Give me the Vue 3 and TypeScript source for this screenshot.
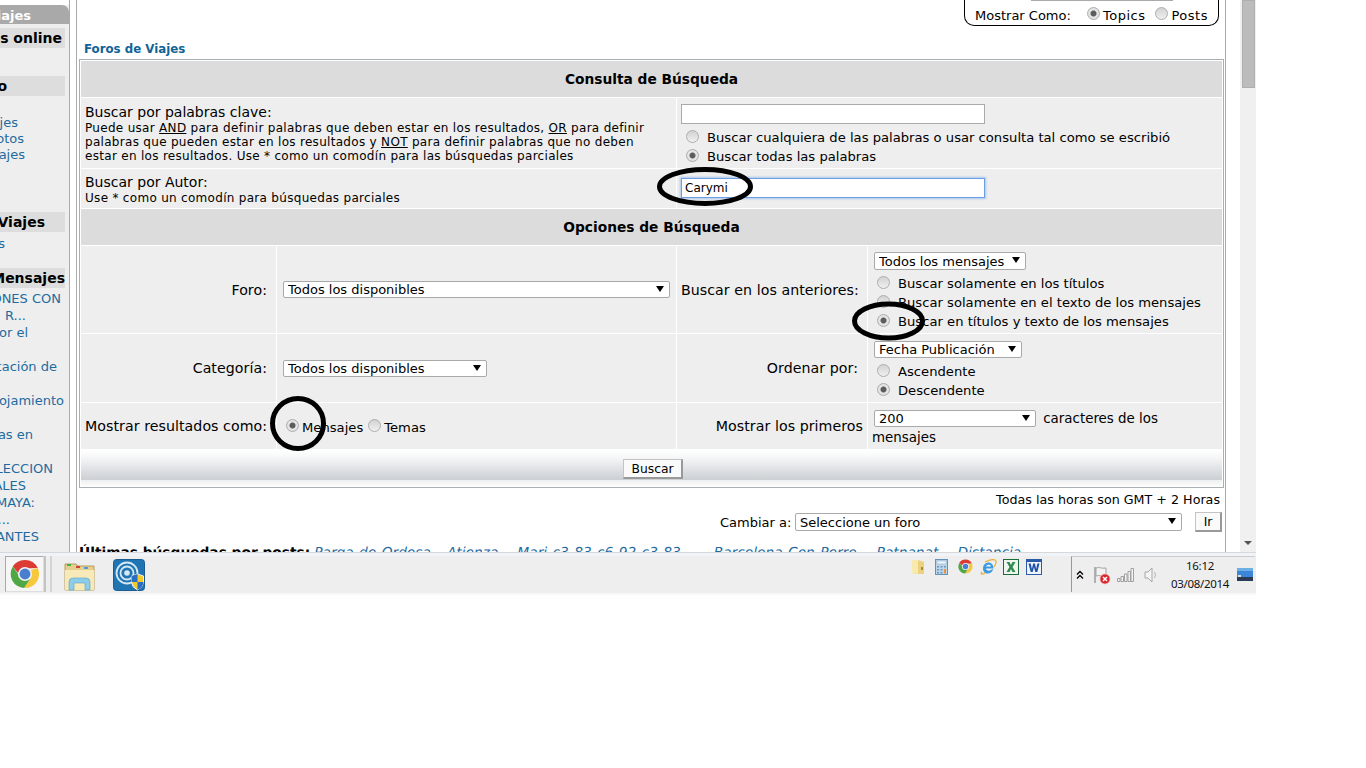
<script setup lang="ts">
interface SideItem {
    text: string,
    end: number,
}

// right edge of each clipped sidebar line, the page is cut off at x=0
const topLinks: SideItem[] = [
    { text: 'Viajes', end: 18 },
    { text: 'Fotos', end: 24 },
    { text: 'Mensajes', end: 25 },
];

const msgLinks: SideItem[] = [
    { text: 'OPINIONES CON', end: 61 },
    { text: 'R...', end: 26 },
    { text: 'Por el', end: 28 },
    { text: '', end: 0 },
    { text: 'Orientación de', end: 57 },
    { text: '', end: 0 },
    { text: 'Alojamiento', end: 64 },
    { text: '', end: 0 },
    { text: 'Ideas en', end: 33 },
    { text: '.', end: 1 },
    { text: 'SELECCION', end: 53 },
    { text: 'LOCALES', end: 26 },
    { text: 'RIVIERA MAYA:', end: 35 },
    { text: '...', end: 10 },
    { text: 'VIAJANTES', end: 39 },
];

const recent = [
    { text: 'Parga de Ordesa', gap: 4 },
    { text: 'Atienza', gap: 16 },
    { text: 'Mari c3 83 c6 92 c3 83', gap: 19 },
    { text: 'Barcelona Con Perro', gap: 33 },
    { text: 'Patnanat', gap: 20 },
    { text: 'Distancia', gap: 19 },
];
</script>

<template>
    <div class="screen">
        <div class="page">
            <aside class="side">
                <div class="side-head"><span>Viajes</span></div>
                <div class="band first" style="padding-right: 3px">Usuarios online</div>
                <div class="band second"><span class="band-end" style="margin-right: 58px">Foro</span></div>
                <div class="links top-links">
                    <div v-for="item of topLinks" :key="item.text" class="link" :style="{ width: item.end + 'px' }">
                        <span>{{ item.text }}</span>
                    </div>
                </div>
                <div class="band third" style="padding-right: 20px">Foros de Viajes</div>
                <div class="link single" style="width: 5px"><span>Foros</span></div>
                <div class="band fourth">Últimos Mensajes</div>
                <div class="links">
                    <div v-for="(item, i) of msgLinks" :key="i" class="link msg" :style="{ width: item.end + 'px' }">
                        <span>{{ item.text }}</span>
                    </div>
                </div>
            </aside>

            <main class="main">
                <div class="show-as">
                    <div class="show-input"></div>
                    <div class="show-row">
                        <span class="show-label">Mostrar Como:</span>
                        <span class="radio on"></span><span class="show-opt">Topics</span>
                        <span class="radio"></span><span class="show-opt">Posts</span>
                    </div>
                </div>

                <a class="crumb">Foros de Viajes</a>

                <table class="form">
                    <colgroup>
                        <col style="width: 195px">
                        <col style="width: 399px">
                        <col style="width: 190px">
                        <col style="width: 354px">
                    </colgroup>
                    <tbody>
                        <tr class="r-head">
                            <th colspan="4">Consulta de Búsqueda</th>
                        </tr>
                        <tr class="r-words">
                            <td colspan="2">
                                <div class="big">Buscar por palabras clave:</div>
                                <div class="small">
                                    Puede usar <u>AND</u> para definir palabras que deben estar en los resultados, <u>OR</u> para definir<br>
                                    palabras que pueden estar en los resultados y <u>NOT</u> para definir palabras que no deben<br>
                                    estar en los resultados. Use * como un comodín para las búsquedas parciales
                                </div>
                            </td>
                            <td colspan="2">
                                <input class="text" type="text">
                                <label class="opt gap-s"><span class="radio"></span>Buscar cualquiera de las palabras o usar consulta tal como se escribió</label>
                                <label class="opt"><span class="radio on"></span>Buscar todas las palabras</label>
                            </td>
                        </tr>
                        <tr class="r-author">
                            <td colspan="2">
                                <div class="big">Buscar por Autor:</div>
                                <div class="small">Use * como un comodín para búsquedas parciales</div>
                            </td>
                            <td colspan="2">
                                <input class="text focus" type="text" value="Carymi">
                            </td>
                        </tr>
                        <tr class="r-head">
                            <th colspan="4">Opciones de Búsqueda</th>
                        </tr>
                        <tr class="r-forum">
                            <td class="lbl">Foro:</td>
                            <td class="mid">
                                <div class="sel" style="width: 387px"><select><option>Todos los disponibles</option></select></div>
                            </td>
                            <td class="lbl">Buscar en los anteriores:</td>
                            <td class="opts">
                                <div class="sel" style="width: 152px; height: 18px"><select><option>Todos los mensajes</option></select></div>
                                <label class="opt gap-s"><span class="radio"></span>Buscar solamente en los títulos</label>
                                <label class="opt"><span class="radio"></span>Buscar solamente en el texto de los mensajes</label>
                                <label class="opt"><span class="radio on"></span>Buscar en títulos y texto de los mensajes</label>
                            </td>
                        </tr>
                        <tr class="r-cat">
                            <td class="lbl">Categoría:</td>
                            <td class="mid">
                                <div class="sel" style="width: 204px"><select><option>Todos los disponibles</option></select></div>
                            </td>
                            <td class="lbl">Ordenar por:</td>
                            <td class="opts">
                                <div class="sel" style="width: 148px"><select><option>Fecha Publicación</option></select></div>
                                <label class="opt gap-s"><span class="radio"></span>Ascendente</label>
                                <label class="opt"><span class="radio on"></span>Descendente</label>
                            </td>
                        </tr>
                        <tr class="r-show">
                            <td class="lbl">Mostrar resultados como:</td>
                            <td class="inline-opts">
                                <span class="radio on"></span><span class="il">Mensajes</span>
                                <span class="radio"></span><span class="il">Temas</span>
                            </td>
                            <td class="lbl tight">Mostrar los primeros</td>
                            <td class="first-chars">
                                <div class="sel" style="width: 162px"><select><option>200</option></select></div>
                                caracteres de los mensajes
                            </td>
                        </tr>
                        <tr class="r-foot">
                            <td colspan="4"><button class="btn" type="button">Buscar</button></td>
                        </tr>
                    </tbody>
                </table>

                <div class="hours">Todas las horas son GMT + 2 Horas</div>
                <div class="jump">
                    <span class="jump-label">Cambiar a:</span>
                    <div class="sel" style="width: 387px; height: 18px"><select><option>Seleccione un foro</option></select></div>
                    <button class="btn go" type="button">Ir</button>
                </div>
                <div class="recent">
                    <b>Últimas búsquedas por posts:</b>
                    <a v-for="r of recent" :key="r.text" :style="{ marginLeft: r.gap + 'px' }">{{ r.text }}</a>
                </div>
            </main>

            <div class="scrollbar">
                <div class="thumb"></div>
                <div class="arrow"></div>
            </div>
        </div>

        <footer class="taskbar">
            <div class="chrome-btn">
                <svg width="30" height="30" viewBox="0 0 32 32">
                    <defs>
                        <symbol id="chrome" viewBox="0 0 32 32">
                            <path d="M16 1a15 15 0 0 1 13.6 8.7L16 10 8.5 15 3 8A15 15 0 0 1 16 1z" fill="#dc3b33" />
                            <path d="M29.6 9.7A15 15 0 0 1 15 31l7-11-1-8z" fill="#f6c93d" />
                            <path d="M3 8a15 15 0 0 0 12 23l6.500-10-9 .5z" fill="#4fa845" />
                            <circle cx="16" cy="16" r="7.500" fill="#f2f2f2" />
                            <circle cx="16" cy="16" r="5.800" fill="#4a7fd0" />
                        </symbol>
                    </defs>
                    <use href="#chrome" />
                </svg>
                <span class="btn-stack"></span>
            </div>
            <svg class="tb-folder" width="33" height="30" viewBox="0 0 33 30">
                <path d="M2 3h11l2 2h16v24H2z" fill="#e6cf8e" stroke="#b99d5c" />
                <rect x="4" y="3" width="4" height="2" fill="#3cb54a" />
                <rect x="13" y="5" width="4" height="2" fill="#c8473a" />
                <rect x="21" y="6" width="4" height="2" fill="#4a9de0" />
                <path d="M2 9h29v20H2z" fill="#f8eab8" />
                <path d="M6 29v-8q0-4 4-4h13q4 0 4 4v8h-5v-7H11v7z" fill="#8ccdea" stroke="#5aa3c8" stroke-width=".6" />
            </svg>
            <svg class="tb-net" width="32" height="32" viewBox="0 0 32 32">
                <rect x=".5" y=".5" width="31" height="31" rx="3" fill="#1f74b4" stroke="#1b5d92" />
                <circle cx="14" cy="14" r="10.500" fill="none" stroke="#d6e8f4" stroke-width="1.800" />
                <circle cx="14" cy="14" r="6.500" fill="none" stroke="#d6e8f4" stroke-width="1.800" />
                <circle cx="14" cy="14" r="2.800" fill="#d6e8f4" />
                <path d="M24.500 15l6 2v6q0 5-6 8-6-3-6-8v-6z" fill="#f4c92f" stroke="#eaf2f8" />
                <path d="M24.500 15v8h-6v-6zM24.500 23h6q0 5-6 8z" fill="#2c6fc0" />
            </svg>

            <div class="quick">
                <svg width="13" height="16" viewBox="0 0 13 16">
                    <path d="M0 1h6l6 2v12H6l-6-1z" fill="#ecd27e" />
                    <path d="M0 1h6v14l-6-1z" fill="#f8e9ae" />
                    <rect x="9" y="8" width="2" height="3" fill="#a88a3c" />
                </svg>
                <svg width="13" height="16" viewBox="0 0 13 16">
                    <rect x=".5" y=".5" width="12" height="15" fill="#bcd7ec" stroke="#5f93bd" />
                    <rect x="2" y="2" width="9" height="3" fill="#eef6fb" stroke="#7fa8c8" stroke-width=".5" />
                    <path d="M2 7h2v1.500H2zM5.500 7h2v1.500h-2zM9 7h2v1.500H9zM2 10h2v1.500H2zM5.500 10h2v1.500h-2zM2 13h2v1.500H2zM5.500 13h2v1.500h-2z" fill="#6d96b8" />
                    <path d="M9 10h2v4.500H9z" fill="#e8923c" />
                </svg>
                <svg width="15" height="15" viewBox="0 0 32 32"><use href="#chrome" /></svg>
                <svg width="17" height="16" viewBox="0 0 17 16">
                    <path d="M3 9.500C3 6 5.500 3.500 8.500 3.500s5 2.500 5 6H6c0 2.500 3.500 3 6 .7h1.300C12 13.500 9.500 14.500 7.500 14.500 5 14.500 3 12.500 3 9.500z" fill="#3c9be0" />
                    <path d="M6 7.500h5C11 5 6.500 5 6 7.500z" fill="#eaf5fc" />
                    <path d="M2 13C0 15 2 16 5 14M5 3c4-2 8-3 10-2 2 1 1 4-1 7" fill="none" stroke="#eeb02e" stroke-width="1.200" />
                </svg>
                <svg width="16" height="16" viewBox="0 0 16 16">
                    <rect x=".5" y=".5" width="15" height="15" fill="#eef5ee" stroke="#1d6b3a" />
                    <path d="M3.500 3h3l1.500 3 1.500-3h3L9.500 8l3 5h-3L8 10l-1.500 3h-3l3-5z" fill="#2f8a4e" />
                </svg>
                <svg width="16" height="16" viewBox="0 0 16 16">
                    <rect x=".5" y=".5" width="15" height="15" fill="#eef3fa" stroke="#2a5aa8" />
                    <rect x="1" y="1" width="14" height="2" fill="#2a5aa8" />
                    <path d="M2.500 4.500h2.200l1.200 5.500 1.300-5.500h1.700L10.200 10l1.200-5.500h2.100L11.300 13H9.300L8 8 6.700 13H4.700z" fill="#1f52a8" />
                </svg>
            </div>

            <div class="tray">
                <svg class="chev" width="8" height="10" viewBox="0 0 8 10">
                    <path d="M1 4.500l3-3 3 3M1 8.500l3-3 3 3" fill="none" stroke="#000" stroke-width="1.300" />
                </svg>
                <svg class="flag" width="18" height="20" viewBox="0 0 18 20">
                    <path d="M2 2v16" stroke="#9a9a9a" stroke-width="1.500" />
                    <path d="M3 3c4-1.500 5 1 10 0v8c-5 1-6-1.500-10 0z" fill="#f2f2f2" stroke="#a4a4a4" />
                    <circle cx="12" cy="14" r="5" fill="#d9262c" stroke="#f1b7b7" stroke-width=".7" />
                    <path d="M10 12l4 4M14 12l-4 4" stroke="#fff" stroke-width="1.500" />
                </svg>
                <svg class="signal" width="17" height="14" viewBox="0 0 17 14">
                    <path d="M.5 10.500h2.500v3H.500zM4 8.500h2.500v5H4zM7.500 6h2.500v7.500H7.500zM11 3.500h2.500v10H11zM14 .5h2.500v13H14z" fill="#f4f4f4" stroke="#a0a0a0" />
                </svg>
                <svg class="speaker" width="14" height="16" viewBox="0 0 14 16">
                    <path d="M1 5h3l4-4v14l-4-4H1z" fill="#f4f4f4" stroke="#a8a8a8" />
                    <path d="M10.500 5q2 3 0 6" fill="none" stroke="#b4b4b4" />
                </svg>
                <div class="clock">
                    <div>16:12</div>
                    <div>03/08/2014</div>
                </div>
                <svg class="desk" width="16" height="13" viewBox="0 0 16 13">
                    <rect width="16" height="13" fill="#3a86d8" />
                    <rect width="16" height="3" fill="#6eaee6" />
                    <rect y="9" width="16" height="4" fill="#2b3a55" />
                    <rect x="1" y="7" width="3" height="2" fill="#d8e0e6" />
                </svg>
            </div>
        </footer>

        <svg class="marks" width="1256" height="595" viewBox="0 0 1256 595">
            <ellipse cx="705" cy="186.500" rx="45.500" ry="17" />
            <ellipse cx="888.500" cy="321" rx="34" ry="17" />
            <ellipse cx="298" cy="423.500" rx="25.500" ry="25" />
        </svg>
    </div>
</template>

<style scoped>
.screen {
    position: relative;
    width: 1256px;
    height: 595px;
    overflow: hidden;
    display: flex;
    flex-direction: column;
    font-family: "DejaVu Sans", Verdana, sans-serif;
    font-size: 12px;
    color: #000;
    background: #fff;
}

.page {
    display: flex;
    height: 552px;
    overflow: hidden;
}

.side {
    flex: none;
    width: 70px;
    height: 552px;
    box-sizing: border-box;
    margin-right: 6px;
    background: #eee;
    background-clip: content-box;
    padding-top: 5px;
    border-right: 1px solid #aaa;
    overflow: hidden;
}

.side-head {
    display: flex;
    justify-content: flex-end;
    height: 19px;
    width: 69px;
    background: #a9a9a9;
    border-top-right-radius: 7px;
    color: #fff;
    font-weight: bold;
    font-size: 13px;
    line-height: 21px;
}

.side-head span {
    margin-right: 38px;
}

.band {
    display: flex;
    justify-content: flex-end;
    width: 65px;
    height: 20px;
    box-sizing: border-box;
    background: #ddd;
    font-weight: bold;
    font-size: 14px;
    line-height: 20px;
    white-space: nowrap;
}

.band.first {
    margin-top: 4px;
}

.band.second {
    margin-top: 28px;
}

.band.third {
    margin-top: 49px;
}

.band.fourth {
    margin-top: 16px;
}

.band-end {
    flex: none;
}

.top-links {
    margin-top: 19px;
}

.link {
    display: flex;
    justify-content: flex-end;
    height: 16px;
    line-height: 16px;
    font-size: 13px;
    white-space: nowrap;
    color: #1f6b9f;
}

.link span {
    flex: none;
}

.link.single {
    margin-top: 4px;
}

.link.msg {
    height: 17px;
    line-height: 17px;
}

.links:last-child {
    margin-top: 2px;
}

.main {
    flex: none;
    width: 1150px;
    height: 552px;
    box-sizing: border-box;
    border-left: 1px solid #aaa;
    border-right: 1px solid #aaa;
    padding-left: 2px;
    overflow: hidden;
    display: flex;
    flex-direction: column;
}

.show-as {
    flex: none;
    align-self: flex-end;
    width: 255px;
    height: 26px;
    box-sizing: border-box;
    margin-right: 6px;
    border: 1px solid #000;
    border-top: 0;
    border-radius: 0 0 10px 10px;
    padding-left: 10px;
}

.show-input {
    width: 142px;
    height: 1px;
    margin-left: 56px;
    background: #aaa;
}

.show-row {
    display: flex;
    align-items: center;
    height: 24px;
    margin-top: 2px;
    font-size: 13px;
    white-space: nowrap;
}

.show-row .radio {
    margin-top: -3px;
}

.show-label {
    width: 112px;
}

.show-opt {
    margin-left: 3px;
    margin-right: 10px;
    letter-spacing: .5px;
}

.crumb {
    flex: none;
    margin: 15px 0 0 5px;
    height: 16px;
    line-height: 16px;
    font-size: 11.800px;
    font-weight: bold;
    color: #0f6397;
}

.form {
    flex: none;
    width: 1145px;
    margin-top: 2px;
    table-layout: fixed;
    border-collapse: separate;
    border-spacing: 1px;
    border: 1px solid #a9b0b4;
    background: #fff;
    font-size: 13.150px;
}

.form td {
    box-sizing: border-box;
    background: #eee;
    padding: 0 4px;
    vertical-align: top;
}

.form th {
    background: #dcdcdc;
    height: 36px;
    padding: 0;
    font-size: 13.750px;
    font-weight: bold;
}

.big {
    font-size: 14px;
    line-height: 16px;
}

.small {
    margin-top: 1px;
    font-size: 12px;
    line-height: 14px;
    letter-spacing: .3px;
    white-space: nowrap;
}

.r-words td {
    height: 70px;
    padding-top: 6px;
}

.r-author td {
    height: 39px;
    padding-top: 5px;
}

.r-author td:last-child {
    padding-top: 9px;
}

.r-forum td {
    height: 87px;
    padding-top: 6px;
}

.r-cat td {
    height: 68px;
    padding-top: 7px;
}

.r-show td {
    height: 46px;
    padding-top: 6px;
}

.form .lbl,
.form .mid,
.form .inline-opts {
    vertical-align: middle;
    padding-top: 0;
}

.form .lbl {
    text-align: right;
    padding-right: 9px;
    font-size: 14.200px;
    letter-spacing: .05px;
    white-space: nowrap;
}

.form .lbl.tight {
    padding-right: 4px;
}

.form .mid {
    padding-left: 6px;
}

.form .inline-opts {
    padding-left: 9px;
    padding-top: 2px;
    white-space: nowrap;
}

.il {
    margin: 0 5px 0 3px;
}

.first-chars {
    line-height: 19px;
    font-size: 13.400px;
}

.first-chars .sel {
    top: -1px;
    margin-right: 3px;
}

.text {
    display: block;
    width: 304px;
    height: 20px;
    box-sizing: border-box;
    margin: 0;
    padding: 0 3px;
    border: 1px solid #aaa;
    background: #fff;
    font: 12px "DejaVu Sans", Verdana, sans-serif;
    color: #000;
    outline: none;
}

.text.focus {
    border-color: #6f9fe2;
    box-shadow: 0 0 2px 1px #a8c6f0;
}

.opt {
    display: flex;
    align-items: center;
    height: 19px;
    white-space: nowrap;
}

.opts .sel,
.first-chars .sel {
    margin-left: 2px;
}

.gap-s {
    margin-top: 4px;
}

.radio {
    flex: none;
    display: inline-block;
    width: 13px;
    height: 13px;
    box-sizing: border-box;
    border: 1px solid #adadad;
    border-radius: 50%;
    background: linear-gradient(#d2d2d2, #f0f0f0);
}

.radio.on {
    background: radial-gradient(circle, #5c5c5c 0, #5c5c5c 2.500px, #e6e6e6 3.500px, #d8d8d8 100%);
}

.opt .radio {
    margin: -3px 8px 0 5px;
}

.sel {
    position: relative;
    display: inline-block;
    height: 17px;
    vertical-align: middle;
}

.sel select {
    display: block;
    width: 100%;
    height: 100%;
    box-sizing: border-box;
    appearance: none;
    border: 1px solid #a9a9a9;
    border-radius: 2px;
    background: #fff;
    padding: 0 0 0 4px;
    font: 13px "DejaVu Sans", Verdana, sans-serif;
    color: #000;
}

.sel::after {
    content: "";
    position: absolute;
    right: 6px;
    top: 5px;
    border-top: 6px solid #000;
    border-left: 4px solid transparent;
    border-right: 4px solid transparent;
}

.r-foot td {
    height: 36px;
    padding: 9px 0 0 542px;
    background: linear-gradient(#fff 0, #f6f7f8 20%, #cdd1d5 80%, #cdd1d5 82%, #eef0f1 84%, #fbfbfb 100%);
}

.btn {
    display: block;
    width: 60px;
    height: 20px;
    margin: 0;
    padding: 0;
    box-sizing: border-box;
    border: 1px solid #c4c4c4;
    border-right: 2px solid #999;
    border-bottom: 2px solid #999;
    background: #fafafa;
    font: 12.300px "DejaVu Sans", Verdana, sans-serif;
    color: #000;
}

.hours {
    flex: none;
    margin: 3px 5px 0 0;
    height: 18px;
    line-height: 18px;
    text-align: right;
    font-size: 12.700px;
}

.jump {
    flex: none;
    display: flex;
    align-items: center;
    height: 20px;
    margin: 3px 0 0 641px;
    font-size: 13px;
}

.jump-label {
    flex: none;
    width: 68px;
    white-space: nowrap;
}

.jump .sel {
    flex: none;
    margin-left: 7px;
}

.btn.go {
    flex: none;
    width: 27px;
    margin-left: 13px;
}

.recent {
    flex: none;
    margin-top: 13px;
    line-height: 16px;
    font-size: 13.750px;
    text-rendering: geometricPrecision;
    white-space: nowrap;
}

.recent a {
    font-style: italic;
    text-decoration: underline;
    word-spacing: 1px;
    color: #1f6b9f;
}

.scrollbar {
    flex: none;
    position: relative;
    width: 16px;
    margin-left: 14px;
    background: #f0f0f0;
}

.thumb {
    width: 13px;
    height: 88px;
    margin-left: 2px;
    background: #bcbcbc;
    border: 1px solid #aeaeae;
    box-sizing: border-box;
}

.arrow {
    position: absolute;
    left: 4px;
    top: 541px;
    border-top: 4px solid #555;
    border-left: 4px solid transparent;
    border-right: 4px solid transparent;
}

.taskbar {
    flex: none;
    display: flex;
    height: 43px;
    box-sizing: border-box;
    border-top: 1px solid #d8d8d8;
    background: linear-gradient(#f0f4f8 0, #f0f4f8 3px, #eee 3px, #eee 40px, #f6f8fa 40px);
    padding-left: 5px;
}

.chrome-btn {
    display: flex;
    align-items: center;
    justify-content: center;
    position: relative;
    flex: none;
    width: 39px;
    height: 36px;
    box-sizing: border-box;
    margin-top: 3px;
    background: #f6f6f6;
    border: 1px solid #a8a8a8;
    border-bottom-color: #ddd;
    border-right-color: #ddd;
}

.btn-stack {
    position: absolute;
    right: -9px;
    top: -1px;
    width: 4px;
    height: 36px;
    border-left: 2px solid #c4c4c4;
    border-right: 2px solid #d4d4d4;
}

.tb-folder {
    flex: none;
    margin: 8px 0 0 19px;
}

.tb-net {
    flex: none;
    margin: 6px 0 0 17px;
}

.quick {
    display: flex;
    align-items: flex-start;
    margin: 6px 0 0 767px;
    width: 130px;
    flex: none;
}

.quick svg {
    flex: none;
    margin-right: 7px;
}

.quick svg:nth-child(1),
.quick svg:nth-child(2) {
    margin-right: 10px;
}

.quick svg:nth-child(4) {
    margin-right: 6px;
}

.tray {
    flex: none;
    position: relative;
    width: 184px;
    height: 36px;
    box-sizing: border-box;
    margin: 3px 0 0 29px;
    border-left: 1px solid #999;
    border-top: 1px solid #ccc;
    display: flex;
    align-items: center;
}

.chev {
    margin-left: 4px;
}

.flag {
    margin-left: 9px;
}

.signal {
    margin-left: 6px;
}

.speaker {
    margin-left: 10px;
}

.clock {
    width: 62px;
    margin-left: 11px;
    text-align: center;
    font-family: "Noto Sans", sans-serif;
    font-size: 11.500px;
    line-height: 18px;
    letter-spacing: -0.3px;
    color: #111;
}

.desk {
    margin: 0 0 0 6px;
}

.marks {
    position: absolute;
    left: 0;
    top: 0;
    pointer-events: none;
}

.marks ellipse {
    fill: none;
    stroke: #000;
    stroke-width: 5;
}
</style>
